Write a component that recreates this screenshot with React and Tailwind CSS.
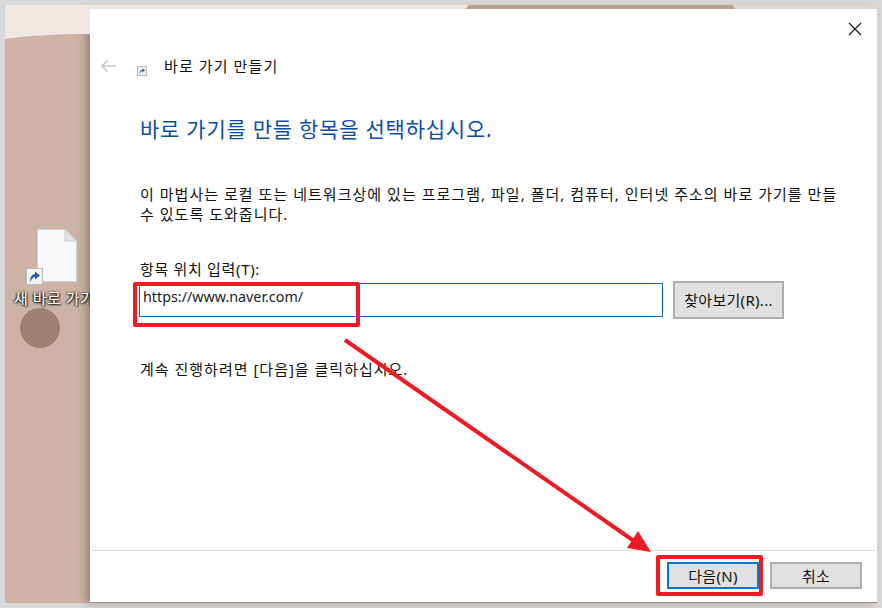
const fontStack = "font-['Noto_Sans','Noto_Sans_CJK_KR',sans-serif]";

function DesktopIcon() {
  return (
    <div className="relative pt-[224px] pl-[21px] w-[85px] h-full overflow-hidden">
      <div className="relative w-[50px] h-[56px]">
        <svg width="40" height="54" viewBox="0 0 40 54" className="absolute left-[11px] top-0">
          <path d="M0.5 0.5H28L39.5 12V52.5H0.5Z" fill="#f7f9fb" stroke="#cfcfcf" />
          <path d="M28 0.5V12H39.5Z" fill="#dfe1e3" stroke="#cfcfcf" />
        </svg>
        <svg width="17" height="17" viewBox="0 0 17 17" className="absolute left-0 top-[39px]">
          <rect x="0.5" y="0.5" width="16" height="16" fill="#f3f3f3" stroke="#b9b9b9" />
          <path d="M4 14C4 9 6 6.5 9 6V3.5L14 7.5L9 11.5V9C7 9.2 5.5 11 4 14Z" fill="#2a5ea8" />
        </svg>
      </div>
      <div className="absolute left-[9px] top-[283px] whitespace-nowrap text-[15px] leading-[20px] tracking-[0.5px] text-white [text-shadow:1px_1px_2px_#000,-1px_0_2px_#000]">
        새 바로 가기
      </div>
      <div className="mt-[23px] -ml-[6px] w-[40px] h-[40px] rounded-full bg-[#9c8272]" />
    </div>
  );
}

function Dialog() {
  return (
    <div className="flex-1 mt-[4px] bg-white flex flex-col border-b-[1px] border-[#a08e83] shadow-[-4px_0_8px_rgba(60,40,30,0.35)]">
      <div className="flex justify-end pt-[13px] pr-[15px] h-[44px]">
        <svg width="14" height="14" viewBox="0 0 14 14">
          <path d="M1 1L13 13M13 1L1 13" fill="none" stroke="#111" strokeWidth="1.1" />
        </svg>
      </div>
      <div className="flex items-center h-[26px] pl-[10px]">
        <svg width="18" height="14" viewBox="0 0 18 14" className="text-[#c8c8c8]">
          <path d="M16 7H2M7.5 1.5L2 7L7.5 12.5" fill="none" stroke="currentColor" strokeWidth="1.6" />
        </svg>
        <svg width="10" height="10" viewBox="0 0 10 10" className="ml-[19px] mt-[10px]">
          <rect x="0.5" y="0.5" width="9" height="9" fill="#f0f0f0" stroke="#bbb" />
          <path d="M2.5 8C2.5 5.5 3.5 4 5.5 3.7V2.2L8 4.3L5.5 6.4V5C4.2 5.2 3.4 6.2 2.5 8Z" fill="#2a5ea8" />
        </svg>
        <span className="ml-[17px] text-[15px] leading-[20px] tracking-[1.1px] text-[#111]">바로 가기 만들기</span>
      </div>
      <div className="flex-1 pl-[49px] pr-[30px]">
        <h1 className="mt-[36px] ml-[1px] text-[21px] leading-[28px] tracking-[0.75px] font-normal text-[#0a4ea3]">
          바로 가기를 만들 항목을 선택하십시오.
        </h1>
        <p className="mt-[41px] ml-[1px] text-[15px] leading-[20px] tracking-[1.03px] text-[#111] whitespace-nowrap">
          이 마법사는 로컬 또는 네트워크상에 있는 프로그램, 파일, 폴더, 컴퓨터, 인터넷 주소의 바로 가기를 만들
          <br />수 있도록 도와줍니다.
        </p>
        <label className="block mt-[35px] ml-[1px] text-[15px] leading-[20px] tracking-[0.67px] text-[#111]">
          항목 위치 입력(T):
        </label>
        <div className="flex items-center gap-[10px] mt-[2px]">
          <div className="w-[524px] h-[34px] border border-[#0f6cbd] pl-[3px] pt-[2px] text-[14.3px] leading-[22px] text-[#222]">
            https://www.naver.com/
          </div>
          <button className="w-[111px] h-[38px] bg-[#e1e1e1] border-2 border-[#adadad] text-[15px] tracking-[0.3px] text-[#111]">
            찾아보기(R)...
          </button>
        </div>
        <p className="mt-[40px] ml-[1px] text-[15px] leading-[20px] tracking-[1px] text-[#111]">
          계속 진행하려면 [다음]을 클릭하십시오.
        </p>
      </div>
      <div className="mx-[2px] border-t border-[#dcdcdc] h-[52px] flex justify-end items-start gap-[11px] pt-[11px] pr-[13px]">
        <button className="w-[92px] h-[27px] bg-[#e1e1e1] border-2 border-[#0078d7] text-[15px] leading-[20px] tracking-[0.3px] text-[#111]">
          다음(N)
        </button>
        <button className="w-[92px] h-[27px] bg-[#e1e1e1] border-2 border-[#adadad] text-[15px] leading-[20px] tracking-[0.3px] text-[#111]">
          취소
        </button>
      </div>
    </div>
  );
}

export default function App() {
  return (
    <div className={`relative w-[882px] h-[608px] overflow-hidden bg-[#d9d9d9] p-[5px] ${fontStack}`}>
      <div className="relative flex h-[598px] bg-[#ccb3a5]">
        {/* wallpaper shapes above the dialog */}
        <svg width="872" height="34" viewBox="0 0 872 34" className="absolute left-0 top-0">
          <path d="M0 0H872V4H730L728 0H464L461 4H85V29C50 29 20 31 0 34Z" fill="#efe7e2" />
          <path d="M461 4L464 0H728L730 4Z" fill="#b89f90" />
          <path d="M730 4H872V0H728Z" fill="#e2d6cf" />
        </svg>
        <DesktopIcon />
        <Dialog />
      </div>

      {/* red annotations */}
      <div className="absolute left-[133px] top-[282px] w-[227px] h-[45px] border-[4px] border-[#ed1c24] rounded-[2px]" />
      <div className="absolute left-[656px] top-[555px] w-[107px] h-[41px] border-[4px] border-[#ed1c24] rounded-[2px]" />
      <svg width="882" height="608" viewBox="0 0 882 608" className="absolute left-0 top-0 pointer-events-none">
        <path d="M345 340L634 541" stroke="#ed1c24" strokeWidth="4" fill="none" />
        <path d="M651 552L638 531L627 548Z" fill="#ed1c24" />
      </svg>
    </div>
  );
}
